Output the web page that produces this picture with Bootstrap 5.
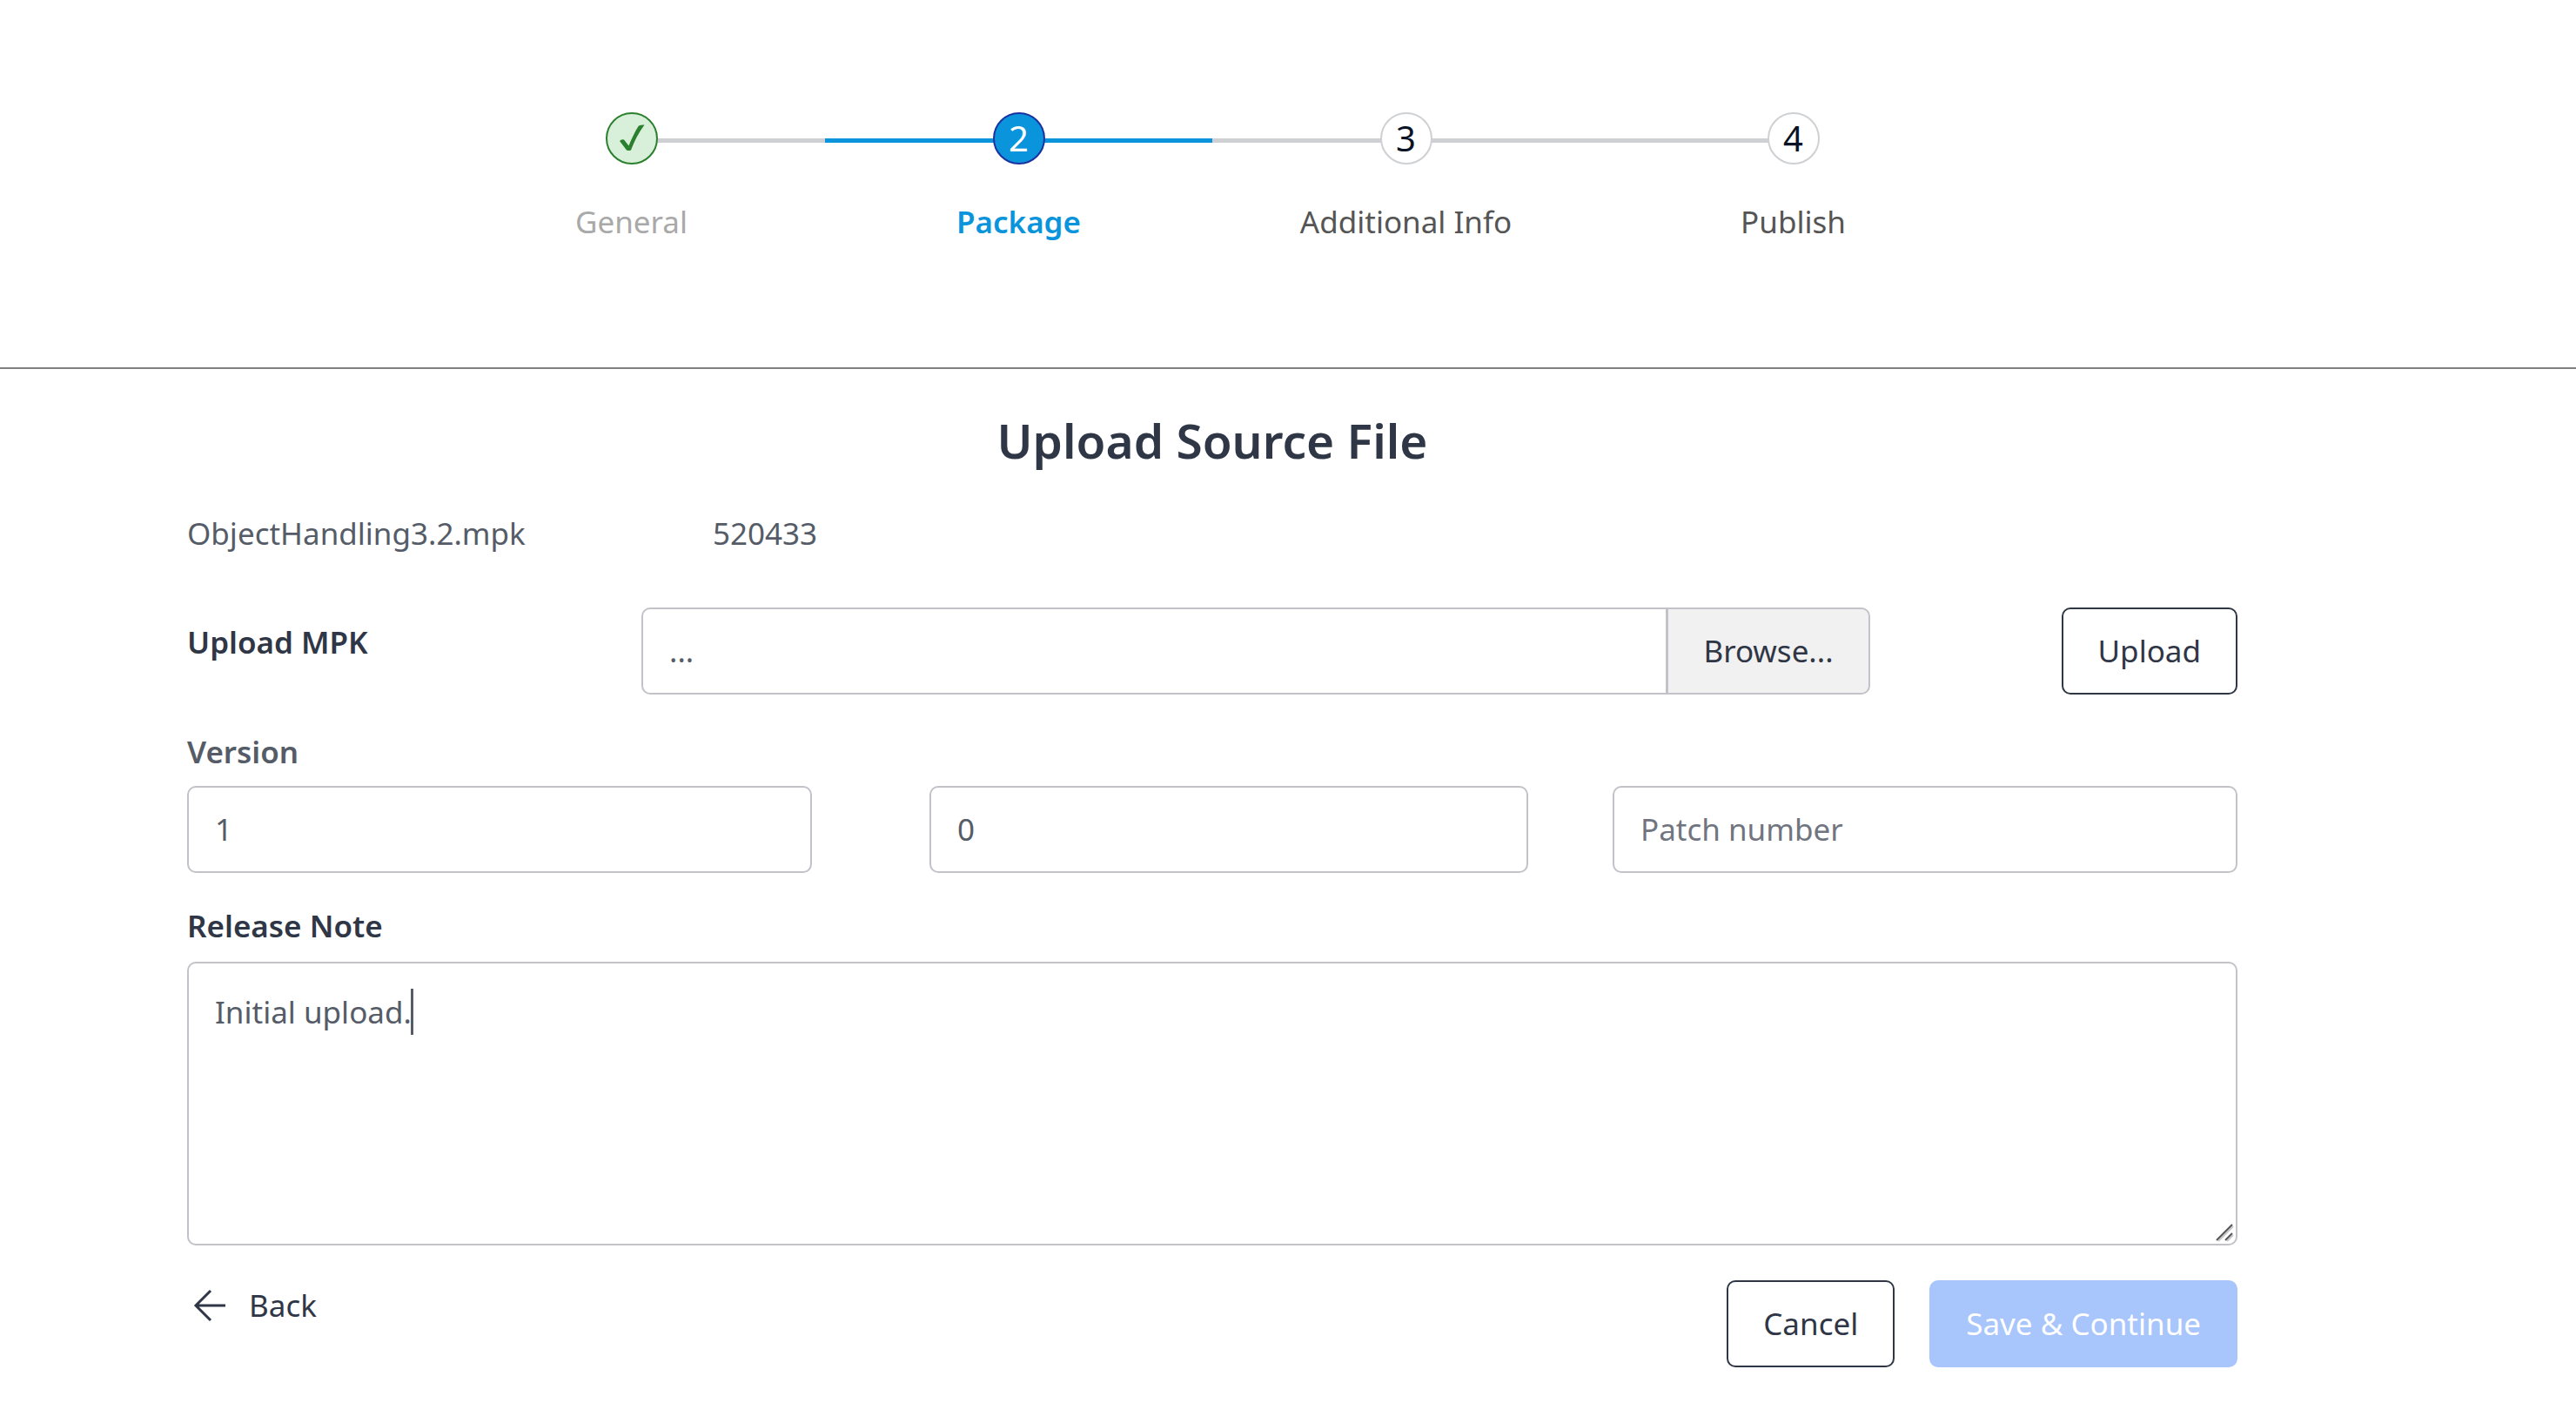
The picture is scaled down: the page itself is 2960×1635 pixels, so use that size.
<!DOCTYPE html>
<html lang="en">
<head>
<meta charset="utf-8">
<meta name="viewport" content="width=device-width, initial-scale=1">
<title>Upload Source File</title>
<link href="https://cdn.jsdelivr.net/npm/bootstrap@5.3.0/dist/css/bootstrap.min.css" rel="stylesheet">
<style>
:root { --ink: #2f3646; --body: #555c68; --line: #c3c2c8; --brand: #0a94dc; --track: #ced0d3; }
body { font: 400 35px/54px "Noto Sans", sans-serif; color: var(--body); background: #fff; }
.page-column { padding-right: 174px; }

/* wizard */
.wizard { border-bottom: 2px solid #808080; padding-top: 129px; padding-bottom: 140px; }
.steps { max-width: 1780px; }
.step { flex: 1 1 0; text-align: center; color: #555; }
.step-track { height: 60px; background: linear-gradient(var(--track), var(--track)) 0 30px / 100% 5px no-repeat; }
.step:first-child .step-track { background-position: 100% 30px; background-size: 50% 5px; }
.step:last-child .step-track { background-size: 50% 5px; }
.step-dot { width: 60px; height: 60px; border: 2px solid var(--track); background: #fff; color: #0a1325; font-size: 40px; line-height: 56px; }
.step-name { margin-top: 39px; }
.step.done { color: #a9a9a9; }
.step.done .step-dot { border-color: #2b802e; background: #d8efd9; }
.step.current { color: var(--brand); font-weight: 600; }
.step.current .step-track { background-image: linear-gradient(var(--brand), var(--brand)); }
.step.current .step-dot { border-color: #1a31a0; background: var(--brand); color: #fff; font-weight: 400; }

/* form */
.upload-form { padding: 46px 215px 0; }
.form-title { font-size: 55px; line-height: 72px; font-weight: 600; color: var(--ink); margin-bottom: 44px; }
.file-line { margin-bottom: 58px; }
.file-name { width: 604px; }
.field-label { font-weight: 600; color: var(--ink); }
.upload-label { width: 522px; padding-top: 13px; }
.file-picker { margin-right: 220px; }
.form-control, .form-control:focus { border: 2px solid var(--line); border-radius: 10px; color: var(--body); font-size: 35px; line-height: 54px; padding: 21px 30px; box-shadow: none; background: #fff; }
.form-control::placeholder { color: #70757f; }
.btn { font-size: 35px; line-height: 54px; padding: 21px 40px; border: 2px solid var(--ink); border-radius: 10px; color: var(--ink); }
.btn-browse { border-color: var(--line); background: #f1f1f1; }
.version-label { margin: 39px 0 12px; color: var(--body); }
.version-grid { display: grid; grid-template-columns: 718fr 135fr 688fr 97fr 718fr; }
.version-grid :nth-child(2) { grid-column: 3; }
.version-grid :nth-child(3) { grid-column: 5; }
.note-label { margin: 34px 0 14px; }
.note-box textarea.form-control { height: 326px; padding-top: 29px; resize: none; display: block; }
.caret { position: absolute; left: 257px; top: 31px; width: 3px; height: 53px; background: var(--body); }
.grip { position: absolute; right: 4px; bottom: 4px; }
.actions { margin-top: 40px; gap: 40px; }
.btn-back { color: var(--ink); text-decoration: none; gap: 23px; padding: 2px 0 0 6px; }
.btn-save, .btn-save:disabled { background: #a8c5fc; border-color: #a8c5fc; color: #fff; opacity: 1; }
</style>
</head>
<body>
<header class="wizard">
  <div class="page-column">
    <ol class="steps list-unstyled d-flex mx-auto mb-0">
      <li class="step done">
        <div class="step-track"><div class="step-dot rounded-circle mx-auto">
          <svg class="d-block" width="56" height="56" viewBox="2 2 56 56" aria-label="Completed"><path fill="#2b802e" d="M16 33Q18 30.500 21 31.500L26.500 38.500C30 30 34 21 38 15.500Q41 14 44.500 14.500C38 23 33 33 29 43.500Q26.500 44.500 24 43.500Z"/></svg>
        </div></div>
        <div class="step-name">General</div>
      </li>
      <li class="step current" aria-current="step">
        <div class="step-track"><div class="step-dot rounded-circle mx-auto">2</div></div>
        <div class="step-name">Package</div>
      </li>
      <li class="step">
        <div class="step-track"><div class="step-dot rounded-circle mx-auto">3</div></div>
        <div class="step-name">Additional Info</div>
      </li>
      <li class="step">
        <div class="step-track"><div class="step-dot rounded-circle mx-auto">4</div></div>
        <div class="step-name">Publish</div>
      </li>
    </ol>
  </div>
</header>
<main class="page-column">
  <form class="upload-form">
    <h1 class="form-title text-center">Upload Source File</h1>
    <div class="file-line d-flex">
      <span class="file-name">ObjectHandling3.2.mpk</span>
      <span>520433</span>
    </div>
    <div class="d-flex align-items-start">
      <label class="field-label upload-label flex-shrink-0" for="mpk">Upload MPK</label>
      <div class="file-picker input-group flex-nowrap">
        <input class="form-control" id="mpk" type="text" value="..." readonly>
        <button class="btn btn-browse" type="button">Browse...</button>
      </div>
      <button class="btn flex-shrink-0" type="button">Upload</button>
    </div>
    <label class="field-label version-label d-block" for="major">Version</label>
    <div class="version-grid">
      <input class="form-control" id="major" type="text" value="1">
      <input class="form-control" type="text" value="0" aria-label="Minor number">
      <input class="form-control" type="text" placeholder="Patch number" aria-label="Patch number">
    </div>
    <label class="field-label note-label d-block" for="note">Release Note</label>
    <div class="note-box position-relative">
      <textarea class="form-control" id="note">Initial upload.</textarea>
      <span class="caret"></span>
      <svg class="grip" width="22" height="22" viewBox="0 0 22 22" fill="none" stroke-width="2"><path stroke="#c8c8c8" d="M4 21L21 4M14 21L21 14"/><path stroke="#555" d="M2 20L20 2M12 20L20 12"/></svg>
    </div>
    <div class="actions d-flex align-items-start">
      <a class="btn-back d-flex align-items-center me-auto" href="#">
        <svg width="42" height="42" viewBox="0 0 42 42" fill="none" stroke="#2f3646" stroke-width="3"><path d="M38 21H4M21 4L4 21L21 38"/></svg>
        Back
      </a>
      <button class="btn" type="button">Cancel</button>
      <button class="btn btn-save" type="submit" disabled>Save &amp; Continue</button>
    </div>
  </form>
</main>
<script src="https://cdn.jsdelivr.net/npm/bootstrap@5.3.0/dist/js/bootstrap.bundle.min.js"></script>
</body>
</html>
